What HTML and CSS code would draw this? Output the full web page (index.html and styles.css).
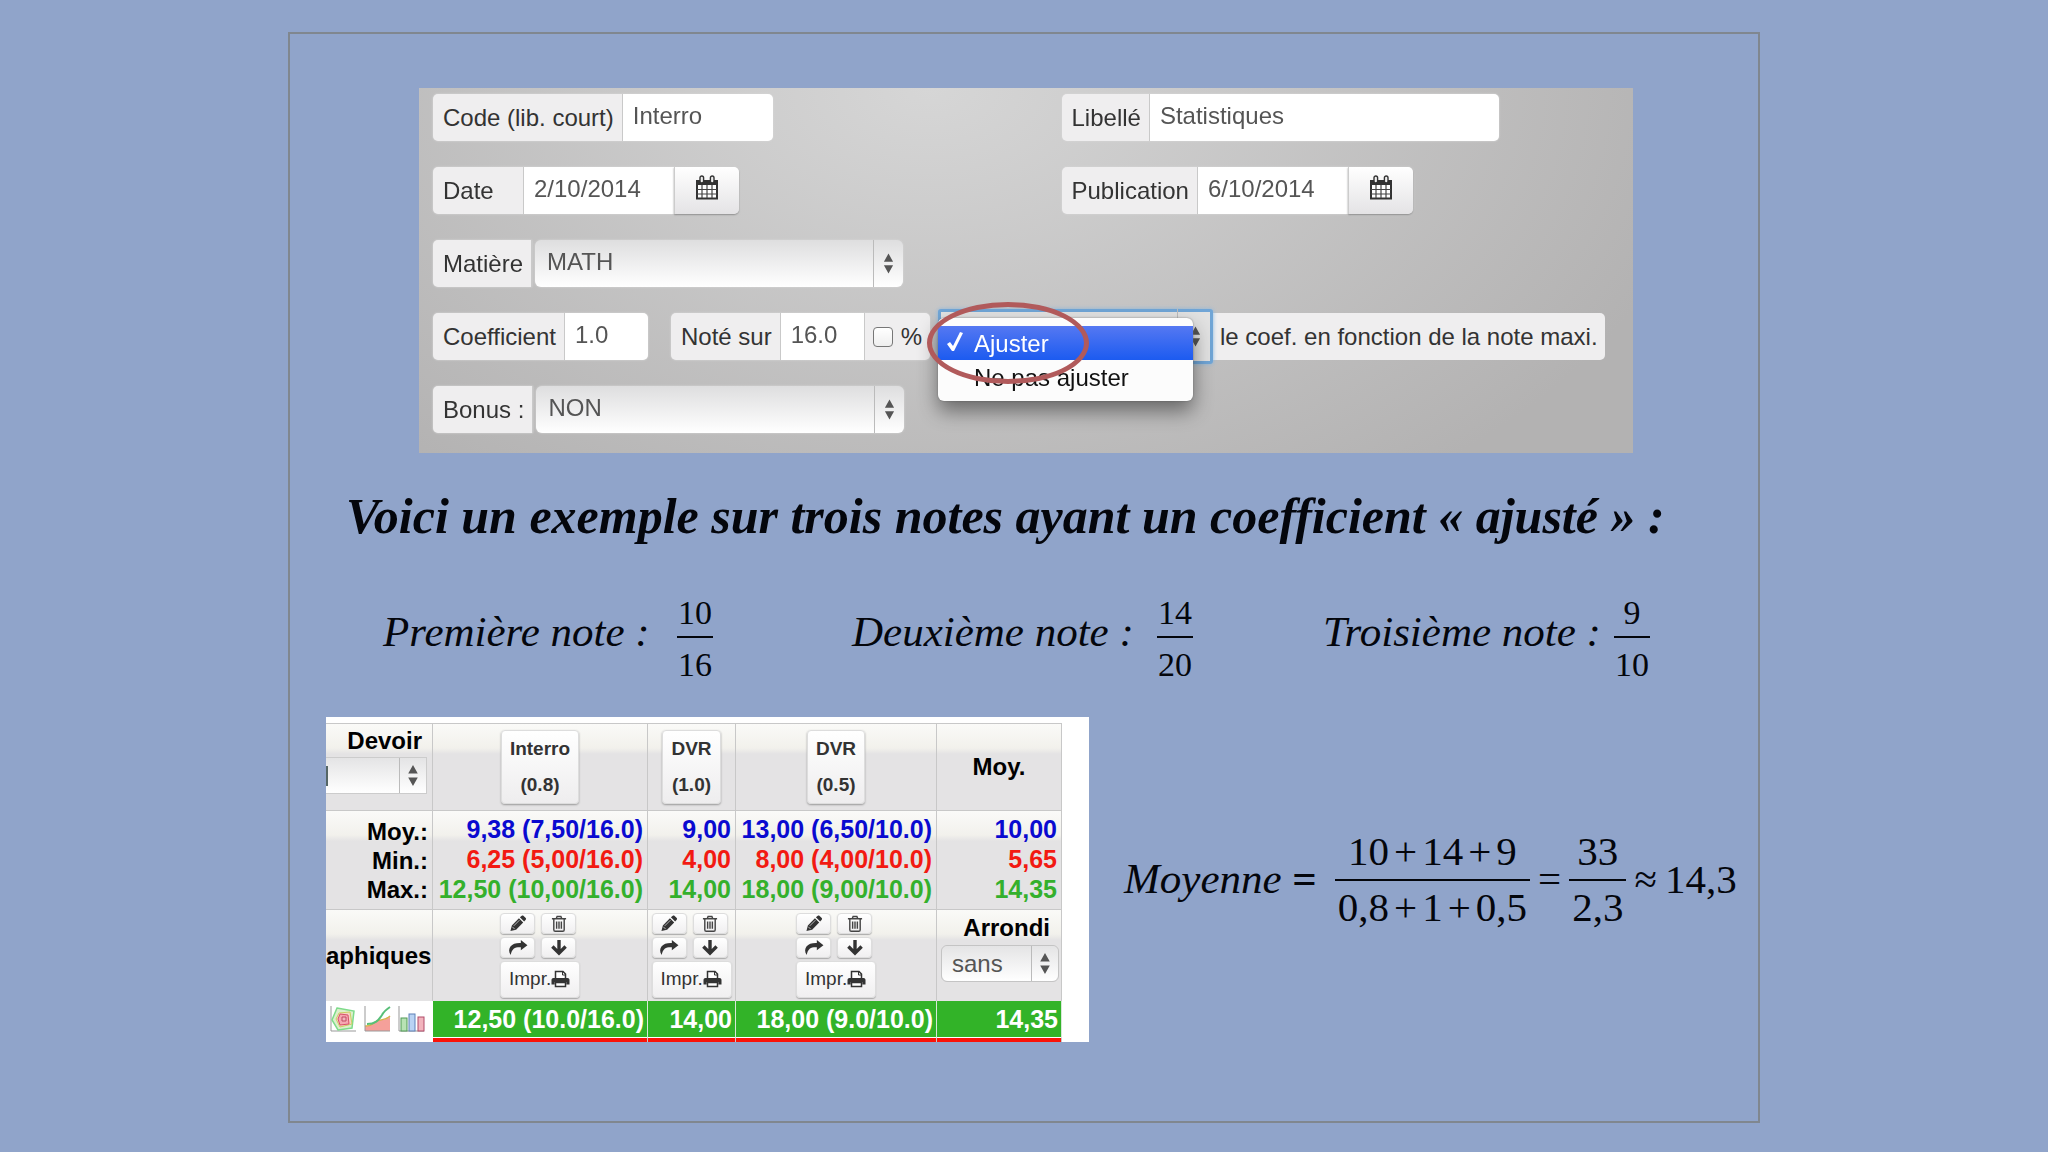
FILE: index.html
```html
<!DOCTYPE html>
<html lang="fr">
<head>
<meta charset="utf-8">
<title>Coefficient ajusté</title>
<link rel="stylesheet" href="styles.css">
</head>
<body>
<svg class="sprite" aria-hidden="true">
  <symbol id="updown" viewBox="0 0 12 24"><path d="M6 1l5 9H1zM6 23L1 14h10z" fill="#555"/></symbol>
  <symbol id="calendar" viewBox="0 0 24 26">
    <path d="M2 6h20v17.500H2z" fill="#fff" stroke="#333" stroke-width="2"/>
    <path d="M1 5h22v5H1z" fill="#333"/>
    <path d="M7 10v13M12 10v13M17 10v13M2 14.500h20M2 19h20" stroke="#444" stroke-width="1.200"/>
    <rect x="5" y="1" width="3.600" height="7" rx="1.800" fill="#eee" stroke="#333" stroke-width="1.400"/>
    <rect x="15.400" y="1" width="3.600" height="7" rx="1.800" fill="#eee" stroke="#333" stroke-width="1.400"/>
  </symbol>
  <symbol id="pencil" viewBox="0 0 18 18"><path d="M1 17l1.500-6L10 3.500l4.500 4.500L7 15.500zM11 2.500L13 .8c.6-.5 1.200-.5 1.700 0L17.200 3.300c.5.5.5 1.100 0 1.700L15.500 7z" fill="#333"/><path d="M3 12.500L5.500 15M4.500 11.500l6-6" stroke="#ddd" stroke-width=".8"/></symbol>
  <symbol id="trash" viewBox="0 0 16 18"><path d="M.5 4h15M5 4l1-2.500h4L11 4M2.500 4v11.500c0 1 .5 1.700 1.500 1.700h8c1 0 1.500-.7 1.500-1.700V4M5.500 7v7.500M8 7v7.500M10.500 7v7.500" fill="none" stroke="#444" stroke-width="1.500"/></symbol>
  <symbol id="forward" viewBox="0 0 20 18"><path d="M13 1l7 5.500-7 5.500V8.800C7 8.500 3.500 10 2.300 17 0 14 .2 10.500 2 8c2.300-3 6-4 11-3.800z" fill="#333"/></symbol>
  <symbol id="down" viewBox="0 0 18 18"><path d="M9 1v14M2 8l7 7 7-7" fill="none" stroke="#333" stroke-width="3.600"/></symbol>
  <symbol id="printer" viewBox="0 0 18 18"><path d="M4 9V1.500h7.500L14 4v5M4 12.500h10v4H4z" fill="#fff" stroke="#333" stroke-width="1.500"/><path d="M11 1.500V5h3" fill="none" stroke="#333"/><path d="M2 8h14c1.200 0 2 .8 2 2v4.500h-3.200V12H3.200v2.500H0V10c0-1.200.8-2 2-2z" fill="#333"/></symbol>
</svg>

<main class="slide">
  <form class="panel">
    <div class="row">
      <div class="group"><label class="tag" for="code">Code (lib. court)</label><input class="field w-date" id="code" value="Interro"></div>
      <div class="group"><label class="tag" for="lib">Libellé</label><input class="field w-long" id="lib" value="Statistiques"></div>
    </div>
    <div class="row">
      <div class="group"><label class="tag tag-date" for="date">Date</label><input class="field w-date" id="date" value="2/10/2014"><button class="cal" type="button" aria-label="Choisir la date"><svg><use href="#calendar"/></svg></button></div>
      <div class="group"><label class="tag" for="pub">Publication</label><input class="field w-date" id="pub" value="6/10/2014"><button class="cal" type="button" aria-label="Choisir la publication"><svg><use href="#calendar"/></svg></button></div>
    </div>
    <div class="row">
      <div class="group"><label class="tag" for="mat">Matière</label><span class="pick pick-wide"><select id="mat"><option>MATH</option></select><svg><use href="#updown"/></svg></span></div>
    </div>
    <div class="row row-mixed">
      <div class="group"><label class="tag" for="coef">Coefficient</label><input class="field w-num" id="coef" value="1.0"></div>
      <div class="group"><label class="tag" for="sur">Noté sur</label><input class="field w-num" id="sur" value="16.0"><label class="tag tag-check"><input type="checkbox">%</label></div>
      <div class="group group-adjust">
        <span class="pick pick-open"><select id="adj" aria-label="Ajuster"><option></option></select><svg><use href="#updown"/></svg>
          <ul class="menu" role="listbox">
            <li class="on" role="option" aria-selected="true"><svg viewBox="0 0 16 20"><path d="M0 12l3-2 3 4L13 0l3 1L7 19H5z" fill="#fff"/></svg>Ajuster</li>
            <li role="option">Ne pas ajuster</li>
          </ul>
          <span class="ring"></span>
        </span><label class="tag tag-end" for="adj">le coef. en fonction de la note maxi.</label>
      </div>
    </div>
    <div class="row">
      <div class="group"><label class="tag" for="bonus">Bonus :</label><span class="pick pick-wide"><select id="bonus"><option>NON</option></select><svg><use href="#updown"/></svg></span></div>
    </div>
  </form>

  <h1>Voici un exemple sur trois notes ayant un coefficient « ajusté » :</h1>

  <section class="notes">
    <span class="name">Première note :</span><span class="frac"><span>10</span><span>16</span></span>
    <span class="name">Deuxième note :</span><span class="frac"><span>14</span><span>20</span></span>
    <span class="name">Troisième note :</span><span class="frac"><span>9</span><span>10</span></span>
  </section>

  <section class="result">
    <div class="sheet">
      <table>
        <colgroup><col class="c1"><col class="c2"><col class="c3"><col class="c4"><col class="c5"></colgroup>
        <thead>
          <tr class="head">
            <th class="side"><label for="dev">Devoir</label><span class="pick pick-cut"><select id="dev"><option></option></select><svg><use href="#updown"/></svg></span></th>
            <th><button class="work" type="button">Interro<br>(0.8)</button></th>
            <th><button class="work" type="button">DVR<br>(1.0)</button></th>
            <th><button class="work" type="button">DVR<br>(0.5)</button></th>
            <th>Moy.</th>
          </tr>
        </thead>
        <tbody>
          <tr class="stats">
            <th>Moy.:<br>Min.:<br>Max.:</th>
            <td><p class="avg">9,38 (7,50/16.0)</p><p class="min">6,25 (5,00/16.0)</p><p class="max">12,50 (10,00/16.0)</p></td>
            <td><p class="avg">9,00</p><p class="min">4,00</p><p class="max">14,00</p></td>
            <td><p class="avg">13,00 (6,50/10.0)</p><p class="min">8,00 (4,00/10.0)</p><p class="max">18,00 (9,00/10.0)</p></td>
            <td><p class="avg">10,00</p><p class="min">5,65</p><p class="max">14,35</p></td>
          </tr>
          <tr class="tools">
            <th class="cut">aphiques</th>
            <td><div class="kit"><button type="button" aria-label="Modifier"><svg><use href="#pencil"/></svg></button><button type="button" aria-label="Supprimer"><svg><use href="#trash"/></svg></button><button type="button" aria-label="Transférer"><svg><use href="#forward"/></svg></button><button type="button" aria-label="Descendre"><svg><use href="#down"/></svg></button><button class="print" type="button">Impr.<svg><use href="#printer"/></svg></button></div></td>
            <td><div class="kit"><button type="button" aria-label="Modifier"><svg><use href="#pencil"/></svg></button><button type="button" aria-label="Supprimer"><svg><use href="#trash"/></svg></button><button type="button" aria-label="Transférer"><svg><use href="#forward"/></svg></button><button type="button" aria-label="Descendre"><svg><use href="#down"/></svg></button><button class="print" type="button">Impr.<svg><use href="#printer"/></svg></button></div></td>
            <td><div class="kit"><button type="button" aria-label="Modifier"><svg><use href="#pencil"/></svg></button><button type="button" aria-label="Supprimer"><svg><use href="#trash"/></svg></button><button type="button" aria-label="Transférer"><svg><use href="#forward"/></svg></button><button type="button" aria-label="Descendre"><svg><use href="#down"/></svg></button><button class="print" type="button">Impr.<svg><use href="#printer"/></svg></button></div></td>
            <th class="round"><label for="arr">Arrondi</label><span class="pick pick-small"><select id="arr"><option>sans</option></select><svg><use href="#updown"/></svg></span></th>
          </tr>
          <tr class="score">
            <td class="charts"><div>
              <svg viewBox="0 0 28 28"><path d="M2 1v25h25" fill="none" stroke="#999"/><path d="M8 3l17 3-2 17-14 2-6-10z" fill="#dcefcc" stroke="#7ddb8a" stroke-width="1.500"/><path d="M10 8l11-1 2 12-12 3-4-8z" fill="#f6d3c5" stroke="#c9cf60"/><path d="M11 9l8 1 1 9-9 1-2-6z" fill="#f5a8b2" stroke="#d8506a"/><path d="M13 12h4v4h-4z" fill="#f4b6be" stroke="#c04a62"/></svg>
              <svg viewBox="0 0 28 28"><path d="M2 26V21c6 1 8-3 12-5s8 0 13-5v15z" fill="#f5a09a"/><path d="M2 21c6 1 8-3 12-5s8 0 13-5" fill="none" stroke="#d9b24a" stroke-width="1.500"/><path d="M4 19c10 0 12-5 15-9 2-4 5-6 8-8" fill="none" stroke="#58bf78" stroke-width="2"/><path d="M2 1v25h25" fill="none" stroke="#999"/></svg>
              <svg viewBox="0 0 28 28"><path d="M2 1v25h25" fill="none" stroke="#999"/><rect x="4" y="13" width="6" height="13" fill="#b8e2b4" stroke="#4f9a55"/><rect x="12" y="9" width="6" height="17" fill="#b9d3f3" stroke="#5d80b8"/><rect x="21" y="12" width="6" height="14" fill="#f2b4bd" stroke="#b04a68"/></svg>
            </div></td>
            <td>12,50 (10.0/16.0)</td><td>14,00</td><td>18,00 (9.0/10.0)</td><td>14,35</td>
          </tr>
          <tr class="next"><td class="charts"></td><td></td><td></td><td></td><td></td></tr>
        </tbody>
      </table>
    </div>

    <div class="formula">
      <span class="name">Moyenne <b>=</b></span>
      <span class="frac"><span>10<i>+</i>14<i>+</i>9</span><span>0,8<i>+</i>1<i>+</i>0,5</span></span>
      <span>=</span>
      <span class="frac"><span>33</span><span>2,3</span></span>
      <span>≈</span>
      <span>14,3</span>
    </div>
  </section>
</main>
</body>
</html>
```
FILE: styles.css
```css
* { box-sizing: border-box; }

body {
  margin: 0;
  padding: 32px 24px 28px;
  background: #90a4ca;
  color: #04060c;
  font-family: "Liberation Serif", serif;
}

.sprite { display: none; }

.slide {
  max-width: 1472px;
  margin: 0 auto;
  padding: 54px 0 79px;
  border: 2px solid #80878f;
}

/* ---- form ---- */
.panel, .sheet, .panel input, .panel select, .panel button, .sheet select, .sheet button {
  font-family: "Liberation Sans", sans-serif;
  font-size: 24px;
}

.panel {
  display: flex;
  flex-direction: column;
  gap: 26px;
  max-width: 1214px;
  margin: 0 123px 0 129px;
  padding: 6px 15px 20px 14px;
  background: radial-gradient(ellipse 65% 135% at 42% 0, #d6d6d6, #b3b2b2);
}

.row { display: grid; grid-template-columns: 628fr 556fr; }
.row-mixed { display: flex; gap: 23px; }
.group { display: flex; height: 47px; filter: drop-shadow(0 0 1px #d8d8d8); }

.tag {
  display: flex;
  align-items: center;
  padding: 0 8px 0 10px;
  border-right: 1px solid #c9c9c9;
  border-radius: 5px 0 0 5px;
  background: #efeeef;
  color: #333;
  white-space: nowrap;
}
.tag-date { width: 91px; }
.tag-check { gap: 8px; padding: 0 8px; border: 0; border-left: 1px solid #c9c9c9; border-radius: 0 5px 5px 0; }
.tag-end { padding: 0 7px; border: 0; border-radius: 0 5px 5px 0; }

.tag-check input {
  appearance: none;
  width: 20px;
  height: 20px;
  margin: 0;
  border: 1px solid #777;
  border-radius: 4px;
  background: linear-gradient(#fff, #eee);
}

.field {
  padding: 0 10px 4px;
  border: 0;
  border-radius: 0 5px 5px 0;
  background: #fff;
  color: #555;
}
.w-date { width: 150px; }
.w-long { width: 349px; }
.w-num { width: 83px; }
.tag + .field:not(:last-child) { border-radius: 0; }

.cal {
  width: 65px;
  padding: 0 0 6px;
  border: 0;
  border-left: 1px solid #ccc;
  border-radius: 0 5px 5px 0;
  background: linear-gradient(#fff, #e4e3e5);
  box-shadow: 0 1px 2px #888;
}
.cal svg { display: block; width: 24px; height: 26px; margin: 0 auto; }

.pick { display: grid; position: relative; }
.pick > select {
  grid-area: 1 / 1;
  appearance: none;
  min-width: 0;
  margin: 0;
  padding: 0 12px 4px;
  border: 0;
  border-radius: 6px;
  background: linear-gradient(#dededf, #fff);
  color: #555;
}
.pick > svg {
  grid-area: 1 / 1;
  justify-self: end;
  width: 30px;
  height: 100%;
  padding: 12px 9px;
  border-left: 1px solid #bbb;
  pointer-events: none;
}
.pick-wide { width: 368px; margin-left: 3px; }

.group-adjust { margin-left: -15px; filter: none; }
.pick-open { width: 275px; margin: -4px 0; }
.pick-open > select {
  border: 3px solid #70a5d6;
  border-radius: 3px;
  background: #e2e2e2;
  box-shadow: 0 0 4px #8cb8e0;
}
.pick-open > svg { width: 36px; padding: 12px; }

.menu {
  position: absolute;
  top: 9px;
  left: 0;
  z-index: 1;
  width: 255px;
  margin: 0;
  padding: 8px 0 7px;
  border-radius: 6px;
  background: #fcfcfc;
  box-shadow: 0 10px 20px rgba(0, 0, 0, .45), 0 0 2px #888;
  color: #111;
  list-style: none;
}
.menu li { height: 34px; padding-left: 36px; line-height: 36px; }
.menu .on { display: flex; gap: 11px; padding-left: 9px; background: linear-gradient(#5578f2, #1c5bf0); color: #fff; }
.menu svg { width: 16px; height: 20px; margin-top: 6px; }

.ring {
  position: absolute;
  top: -7px;
  left: -11px;
  z-index: 2;
  width: 162px;
  height: 82px;
  border: 5px solid #b15a5b;
  border-radius: 50%;
}

/* ---- text and fractions ---- */
h1 {
  margin: 33px 0 0;
  padding: 0 94px 0 56px;
  font-size: 50px;
  font-style: italic;
  line-height: 60px;
  white-space: nowrap;
}

.notes {
  display: grid;
  grid-template-columns: 294fr 175fr 305fr 166fr 291fr 144fr;
  margin: 49px 0 0;
  padding-left: 93px;
  align-items: center;
  justify-items: start;
}
.name { font-size: 43px; font-style: italic; white-space: nowrap; }
.notes .name { padding-bottom: 16px; }

.frac { display: grid; text-align: center; }
.notes .frac { font-size: 34px; line-height: 36px; }
.notes .frac > span { padding: 0 1px 5px; }
.notes .frac > span + span { padding: 9px 1px 0; border-top: 2px solid; }

.result { display: flex; align-items: center; gap: 35px; margin-top: 34px; padding-left: 36px; }

.formula { display: flex; align-items: center; gap: 8px; padding-bottom: 2px; font-size: 41px; line-height: 44px; white-space: nowrap; }
.formula .name { margin-right: 10px; }
.formula .name b { font-style: normal; }
.formula .frac > span { padding: 0 3px 6px; }
.formula .frac > span + span { padding: 4px 3px 0; border-top: 2px solid; }
.formula i { padding: 0 5px; font-style: normal; }

/* ---- grade sheet ---- */
.sheet { flex: none; padding: 6px 27px 0 0; background: #fff; }

table { width: 736px; border-collapse: separate; border-spacing: 0; table-layout: fixed; font-size: 24px; }
.c1 { width: 107px; }
.c2 { width: 215px; }
.c3 { width: 88px; }
.c4 { width: 201px; }
.c5 { width: 125px; }

th, td {
  padding: 0;
  border-top: 1px solid #c8c8c8;
  border-right: 1px solid #c8c8c8;
  background: linear-gradient(#fafaf8, #f2f1ec 24px, #e4e3e4 30px);
  color: #000;
}
.head { height: 87px; }
.stats { height: 99px; }
.tools { height: 92px; }
.side, .round { vertical-align: top; text-align: right; }
.side label { display: block; padding: 3px 10px 0 0; line-height: 28px; }

.pick-cut { width: 101px; height: 37px; margin-top: 2px; border: 1px solid #ccc; border-left: 0; }
.pick-cut > select { border-radius: 0; background: linear-gradient(#566, #566) 0 8px / 2px 20px no-repeat, linear-gradient(#e4e4e5, #fff); }
.pick-small { width: 118px; height: 37px; margin: 3px 0 0 4px; border: 1px solid #c4c4c4; border-radius: 6px; }
.pick-cut > svg, .pick-small > svg { width: 27px; padding: 6px; }
.pick-small > select { padding: 0 10px; background: linear-gradient(#e4e4e5, #fff); }
.round label { display: block; padding: 4px 11px 0 0; line-height: 28px; }

.work {
  padding: 0 8px;
  border: 1px solid #ddd;
  border-radius: 4px;
  background: linear-gradient(#fff, #eeedee);
  box-shadow: 0 1px 2px #999;
  color: #333;
}
.sheet .work { font-size: 19px; font-weight: bold; line-height: 36px; }

.stats th { padding-right: 4px; line-height: 29px; text-align: right; }
.stats p { margin: 0; line-height: 30px; }
.stats td, .score td { padding-right: 4px; font-size: 25px; font-weight: bold; text-align: right; }
.stats td { padding-bottom: 2px; white-space: nowrap; }
.avg { color: #0a0ad0; }
.min { color: #f21a12; }
.max { color: #34b02c; }

.cut { text-align: left; }

.kit { display: grid; grid-template-columns: 35px 35px; gap: 3px 6px; width: 80px; margin: 0 auto; padding-bottom: 1px; }
.kit button {
  height: 21px;
  padding: 0;
  border: 1px solid #ddd;
  border-radius: 4px;
  background: linear-gradient(#fff, #f0eff0);
  box-shadow: 0 1px 1px #aaa;
  color: #333;
}
.kit svg { display: block; width: 20px; height: 17px; margin: 0 auto; }
.kit .print { display: flex; grid-column: 1 / 3; align-items: center; width: 80px; height: 37px; padding-left: 8px; font-size: 19px; }
.kit .print svg { width: 19px; height: 18px; margin: 0; }

.score td { height: 36px; border-top: 0; border-right-color: #d8e8d8; background: #32b328; color: #fff; line-height: 36px; }
.score td:not(.charts) { padding-right: 3px; }
.next td { height: 5px; border-top: 1px solid #fff; background: #fa1208; }
.score .charts, .next .charts { padding: 0; border-right-color: #fff; background: #fff; }
.charts div { display: flex; gap: 6px; padding-left: 3px; }
.charts svg { width: 28px; height: 28px; }
```
